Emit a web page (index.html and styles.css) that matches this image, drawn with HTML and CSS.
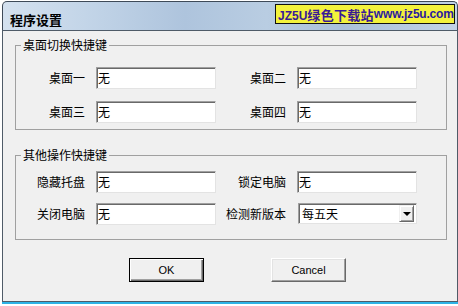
FILE: index.html
```html
<!DOCTYPE html>
<html lang="zh-CN">

<head>
    <meta charset="UTF-8">
    <title>程序设置</title>
    <link rel="stylesheet" href="styles.css">
</head>

<body>
    <div class="window">
        <div class="titlebar">
            <span class="title">程序设置</span>
            <div class="watermark"><span class="wm-name">JZ5U<span class="wm-cjk">绿色下载站</span></span><span class="wm-url">www.jz5u.com</span></div>
        </div>

        <div class="client">
            <fieldset class="group group-desktop">
                <legend>桌面切换快捷键</legend>
                <div class="fields">
                    <label>桌面一</label>
                    <input type="text" value="无">
                    <label>桌面二</label>
                    <input type="text" value="无">
                    <label>桌面三</label>
                    <input type="text" value="无">
                    <label>桌面四</label>
                    <input type="text" value="无">
                </div>
            </fieldset>

            <fieldset class="group group-other">
                <legend>其他操作快捷键</legend>
                <div class="fields">
                    <label>隐藏托盘</label>
                    <input type="text" value="无">
                    <label>锁定电脑</label>
                    <input type="text" value="无">
                    <label>关闭电脑</label>
                    <input type="text" value="无">
                    <label>检测新版本</label>
                    <div class="select">
                        <span class="select-value">每五天</span>
                        <span class="select-arrow"></span>
                    </div>
                </div>
            </fieldset>

            <div class="buttons">
                <button class="btn btn-default">OK</button>
                <button class="btn">Cancel</button>
            </div>
        </div>
        <div class="frame-bottom"></div>
    </div>
</body>

</html>
```

FILE: styles.css
```css
html,
body {
    margin: 0;
    padding: 0;
}

body {
    width: 458px;
    height: 306px;
    overflow: hidden;
    background-color: #fff;
    font-family: "Noto Sans CJK SC", "Liberation Sans", sans-serif;
    font-size: 12px;
    color: #000;
}

.window {
    box-sizing: border-box;
    width: 456px;
    margin: 1px 0 0 2px;
    border: 1px solid #3e4a58;
    border-bottom: none;
    border-radius: 5px 5px 0 0;
    background: linear-gradient(to right, #d4e1ef 0%, #c3d5e8 18%, #aec4dd 40%, #b9cde2 58%, #a9c0da 75%, #c2d4e7 100%);
}

/* title bar */
.titlebar {
    display: flex;
    align-items: flex-start;
    height: 28px;
    padding: 0 1px 0 7px;
}

.title {
    margin-top: 10px;
    font-size: 13px;
    font-weight: bold;
    line-height: 15px;
}

.watermark {
    display: flex;
    align-items: center;
    justify-content: space-between;
    box-sizing: border-box;
    width: 180px;
    margin: 2px 1px 0 auto;
    height: 20px;
    padding: 0 2px;
    border: 1px solid #111;
    background-color: #f3f23c;
    font-family: "Liberation Sans", "Noto Sans CJK SC", sans-serif;
    font-weight: bold;
    font-size: 12px;
    white-space: nowrap;
}

.wm-name {
    color: #3a1a96;
}

.wm-cjk {
    font-size: 13px;
    letter-spacing: 0.3px;
}

.wm-url {
    color: #2a1aa0;
    letter-spacing: -0.2px;
}

/* client area */
.client {
    height: 270px;
    margin: 0 -1px;
    border: 1px solid #4f5b68;
    background-color: #f0f0f0;
    padding: 0 10px 0 12px;
    box-sizing: content-box;
}

.group {
    margin: 7px 0 0 0;
    padding: 15px 0 6px 0;
    border: 1px solid #a0a0a0;
    min-width: 0;
}

.group legend {
    margin-left: 5px;
    padding: 0 2px;
    line-height: 14px;
}

.group-other {
    margin-top: 18px;
    padding: 9px 0 14px 0;
}

.fields {
    display: grid;
    grid-template-columns: 80px 120px 81px 120px;
    row-gap: 12px;
    align-items: center;
}

.group-other .fields {
    row-gap: 10px;
}

.fields label {
    text-align: right;
    padding-right: 11px;
    line-height: 14px;
    white-space: nowrap;
}

.fields input {
    box-sizing: border-box;
    width: 120px;
    height: 22px;
    margin: 0;
    padding: 1px 2px 3px 1px;
    border: 1px solid;
    border-color: #a0a0a0 #e3e3e3 #e3e3e3 #a0a0a0;
    box-shadow: inset 1px 1px 0 #696969;
    background-color: #fff;
    font-family: "Noto Sans CJK SC", sans-serif;
    font-size: 12px;
    color: #000;
    outline: none;
}

/* dropdown */
.select {
    box-sizing: border-box;
    display: flex;
    align-items: center;
    align-self: start;
    width: 119px;
    height: 21px;
    margin-left: 1px;
    padding: 1px 2px 1px 3px;
    border: 1px solid;
    border-color: #a0a0a0 #e3e3e3 #e3e3e3 #a0a0a0;
    box-shadow: inset 1px 1px 0 #696969;
    background-color: #fff;
}

.select-value {
    flex: 1;
    line-height: 14px;
}

.select-arrow {
    box-sizing: border-box;
    display: flex;
    align-items: center;
    justify-content: center;
    width: 15px;
    height: 17px;
    border: 1px solid;
    border-color: #f0f0f0 #696969 #696969 #f0f0f0;
    box-shadow: inset 1px 1px 0 #fff, inset -1px -1px 0 #a0a0a0;
    background-color: #f0f0f0;
}

.select-arrow::after {
    content: '';
    border-left: 4px solid transparent;
    border-right: 4px solid transparent;
    border-top: 4px solid #000;
    margin-top: 1px;
}

/* buttons */
.buttons {
    display: flex;
    gap: 67px;
    margin-top: 18px;
    padding-left: 114px;
}

.btn {
    box-sizing: border-box;
    width: 75px;
    height: 24px;
    margin: 0;
    padding: 0;
    border: 1px solid;
    border-color: #fff #696969 #696969 #fff;
    box-shadow: inset -1px -1px 0 #a0a0a0, inset 1px 1px 0 #e3e3e3;
    background-color: #f0f0f0;
    font-family: "Liberation Sans", sans-serif;
    font-size: 11px;
    color: #000;
}

.btn-default {
    border-color: #000;
    box-shadow: inset 1px 1px 0 #fff, inset -1px -1px 0 #696969, inset -2px -2px 0 #a0a0a0;
}

.frame-bottom {
    height: 2px;
    margin: 0 -1px;
    background-color: #2eb3e6;
}
```
